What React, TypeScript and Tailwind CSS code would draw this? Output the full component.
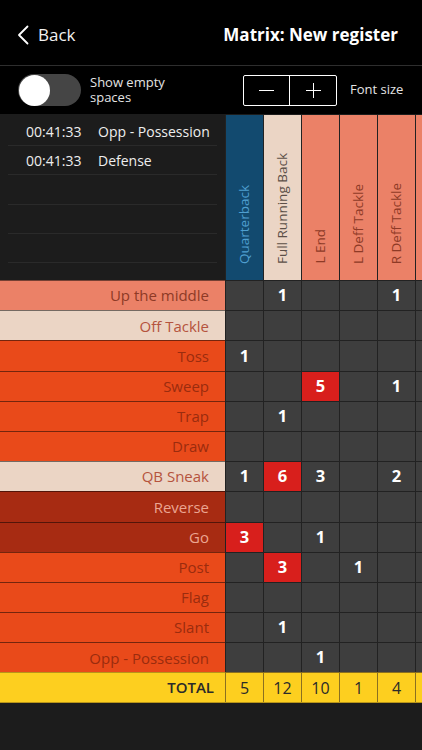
import React from 'react';

type Row = { label: string; tone: 'salmon' | 'beige' | 'orange' | 'rust'; cells: (number | null)[]; hot?: number[] };

const toneClass: Record<Row['tone'], string> = {
  salmon: 'bg-[#eb8167] text-[#8e3a26]',
  beige: 'bg-[#ebd5c5] text-[#b5533d]',
  orange: 'bg-[#e94a1a] text-[#9a2c0e]',
  rust: 'bg-[#a72b12] text-[#eba591]',
};

const rows: Row[] = [
  { label: 'Up the middle', tone: 'salmon', cells: [null, 1, null, null, 1, null] },
  { label: 'Off Tackle', tone: 'beige', cells: [null, null, null, null, null, null] },
  { label: 'Toss', tone: 'orange', cells: [1, null, null, null, null, null] },
  { label: 'Sweep', tone: 'orange', cells: [null, null, 5, null, 1, null], hot: [2] },
  { label: 'Trap', tone: 'orange', cells: [null, 1, null, null, null, null] },
  { label: 'Draw', tone: 'orange', cells: [null, null, null, null, null, null] },
  { label: 'QB Sneak', tone: 'beige', cells: [1, 6, 3, null, 2, null], hot: [1] },
  { label: 'Reverse', tone: 'rust', cells: [null, null, null, null, null, null] },
  { label: 'Go', tone: 'rust', cells: [3, null, 1, null, null, null], hot: [0] },
  { label: 'Post', tone: 'orange', cells: [null, 3, null, 1, null, null], hot: [1] },
  { label: 'Flag', tone: 'orange', cells: [null, null, null, null, null, null] },
  { label: 'Slant', tone: 'orange', cells: [null, 1, null, null, null, null] },
  { label: 'Opp - Possession', tone: 'orange', cells: [null, null, 1, null, null, null] },
];

const columns = [
  { name: 'Quarterback', cls: 'bg-[#124a6f] text-[#4f9fd0]' },
  { name: 'Full Running Back', cls: 'bg-[#ebd5c5] text-[#5c4f47]' },
  { name: 'L End', cls: 'bg-[#eb8167] text-[#8e3a26]' },
  { name: 'L Deff Tackle', cls: 'bg-[#eb8167] text-[#8e3a26]' },
  { name: 'R Deff Tackle', cls: 'bg-[#eb8167] text-[#8e3a26]' },
  { name: '', cls: 'bg-[#eb8167] text-[#8e3a26]' },
];

const totals = [5, 12, 10, 1, 4, null];

export default function App() {
  return (
    <div className="w-[422px] h-[750px] overflow-hidden bg-[#1c1c1c] text-white font-['Open_Sans',sans-serif]">
      {/* nav bar */}
      <div className="h-[66px] bg-black flex items-center justify-between pl-[17px] pr-[24px] border-b border-[#2e2e2e]">
        <div className="flex items-center gap-[9px] pt-[5px]">
          <svg width="12" height="20" viewBox="0 0 12 20" fill="none">
            <path d="M10.5 1.5 2 10l8.5 8.5" stroke="#fff" strokeWidth="1.8" strokeLinecap="round" strokeLinejoin="round" />
          </svg>
          <span className="text-[17px] text-[#f2f2f2]">Back</span>
        </div>
        <span className="text-[17px] font-bold pt-[5px]">Matrix: New register</span>
      </div>

      {/* options */}
      <div className="h-[48px] bg-black flex items-center pl-[18px]">
        <div className="w-[63px] h-[32px] rounded-full bg-[#454545] p-[1px] flex items-center">
          <div className="w-[31px] h-[31px] rounded-full bg-white" />
        </div>
        <div className="ml-[9px] text-[13px] leading-[15px] text-[#e4e4e4] w-[90px]">Show empty spaces</div>
        <div className="ml-[63px] flex h-[31px] border border-white rounded-[2px]">
          <div className="w-[46px] flex items-center justify-center border-r border-white">
            <div className="w-[15px] h-px bg-white" />
          </div>
          <div className="w-[46px] flex items-center justify-center relative">
            <div className="w-[15px] h-px bg-white" />
            <div className="absolute w-px h-[15px] bg-white" />
          </div>
        </div>
        <span className="ml-[13px] text-[13px] text-[#e4e4e4]">Font size</span>
      </div>

      {/* table */}
      <div className="mt-px">
        <div className="flex h-[165px]">
          <div className="w-[225px] shrink-0 bg-[#1c1c1c] px-[8px]">
            {[
              ['00:41:33', 'Opp - Possession'],
              ['00:41:33', 'Defense'],
              ['', ''],
              ['', ''],
              ['', ''],
            ].map(([t, l], i) => (
              <div key={i} className={`flex items-center text-[14px] text-[#eee] border-b border-[#2a2a2a] ${i === 0 ? 'h-[31px] pt-[3px]' : 'h-[29.3px]'}`}>
                <span className="w-[90px] pl-[18px] shrink-0">{t}</span>
                <span>{l}</span>
              </div>
            ))}
          </div>
          {columns.map((c, i) => (
            <div key={i} className={`w-[38px] shrink-0 border-l border-[#222] flex items-end justify-center pb-[16px] ${c.cls}`}>
              <span className="[writing-mode:vertical-rl] rotate-180 text-[13.5px] whitespace-nowrap">{c.name}</span>
            </div>
          ))}
        </div>

        {rows.map((r) => (
          <div key={r.label} className="flex h-[30.2px]">
            <div className={`w-[225px] shrink-0 border-t border-black/50 flex items-center justify-end pr-[16px] text-[15px] ${toneClass[r.tone]}`}>
              {r.label}
            </div>
            {r.cells.map((v, j) => (
              <div
                key={j}
                className={`w-[38px] shrink-0 border-l border-t border-[#222] flex items-center justify-center text-[16.5px] font-bold ${r.hot?.includes(j) ? 'bg-[#d81f1c]' : 'bg-[#3e3e3e]'}`}
              >
                {v}
              </div>
            ))}
          </div>
        ))}

        <div className="flex h-[30.2px] bg-[#fdcf1f] text-[#2a2a2a] border-b border-[#b8941a]">
          <div className="w-[225px] shrink-0 border-t border-[#b8941a] flex items-center justify-end pr-[11px] text-[15px] font-semibold">TOTAL</div>
          {totals.map((v, j) => (
            <div key={j} className="w-[38px] shrink-0 border-l border-t border-[#8a7020] flex items-center justify-center text-[16px]">
              {v}
            </div>
          ))}
        </div>
      </div>
    </div>
  );
}
